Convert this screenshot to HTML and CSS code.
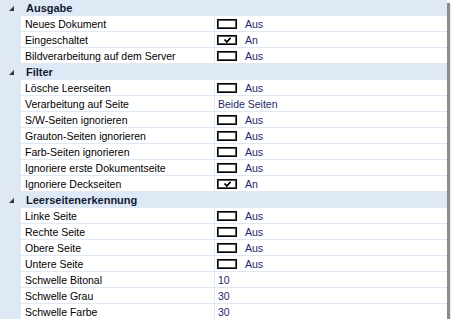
FILE: index.html
```html
<!DOCTYPE html>
<html lang="de">
<head>
<meta charset="utf-8">
<link rel="stylesheet" href="styles.css">
</head>
<body>
<div class="grid">
  <div class="cat"><svg class="arrow" width="5" height="5" viewBox="0 0 5 5"><polygon points="5,0 5,5 0,5"/></svg><span>Ausgabe</span></div>
  <div class="row"><div class="label">Neues Dokument</div><div class="value"><span class="cb"></span>Aus</div></div>
  <div class="row"><div class="label">Eingeschaltet</div><div class="value"><span class="cb"><svg width="9" height="6" viewBox="0 0 9 6"><path d="M1.5 2.5 L3.8 5 L7.5 0.8" fill="none" stroke="#000" stroke-width="1.8"/></svg></span>An</div></div>
  <div class="row last"><div class="label">Bildverarbeitung auf dem Server</div><div class="value"><span class="cb"></span>Aus</div></div>

  <div class="cat"><svg class="arrow" width="5" height="5" viewBox="0 0 5 5"><polygon points="5,0 5,5 0,5"/></svg><span>Filter</span></div>
  <div class="row"><div class="label">Lösche Leerseiten</div><div class="value"><span class="cb"></span>Aus</div></div>
  <div class="row"><div class="label">Verarbeitung auf Seite</div><div class="value">Beide Seiten</div></div>
  <div class="row"><div class="label">S/W-Seiten ignorieren</div><div class="value"><span class="cb"></span>Aus</div></div>
  <div class="row"><div class="label">Grauton-Seiten ignorieren</div><div class="value"><span class="cb"></span>Aus</div></div>
  <div class="row"><div class="label">Farb-Seiten ignorieren</div><div class="value"><span class="cb"></span>Aus</div></div>
  <div class="row"><div class="label">Ignoriere erste Dokumentseite</div><div class="value"><span class="cb"></span>Aus</div></div>
  <div class="row last"><div class="label">Ignoriere Deckseiten</div><div class="value"><span class="cb"><svg width="9" height="6" viewBox="0 0 9 6"><path d="M1.5 2.5 L3.8 5 L7.5 0.8" fill="none" stroke="#000" stroke-width="1.8"/></svg></span>An</div></div>

  <div class="cat"><svg class="arrow" width="5" height="5" viewBox="0 0 5 5"><polygon points="5,0 5,5 0,5"/></svg><span>Leerseitenerkennung</span></div>
  <div class="row"><div class="label">Linke Seite</div><div class="value"><span class="cb"></span>Aus</div></div>
  <div class="row"><div class="label">Rechte Seite</div><div class="value"><span class="cb"></span>Aus</div></div>
  <div class="row"><div class="label">Obere Seite</div><div class="value"><span class="cb"></span>Aus</div></div>
  <div class="row"><div class="label">Untere Seite</div><div class="value"><span class="cb"></span>Aus</div></div>
  <div class="row"><div class="label">Schwelle Bitonal</div><div class="value num">10</div></div>
  <div class="row"><div class="label">Schwelle Grau</div><div class="value num">30</div></div>
  <div class="row end"><div class="label">Schwelle Farbe</div><div class="value num">30</div></div>
</div>
</body>
</html>
```

FILE: styles.css
```css
html, body {
  margin: 0;
  padding: 0;
  background: #ffffff;
}

.grid {
  width: 447px;
  display: flex;
  flex-direction: column;
  background: #ffffff;
  box-shadow: 3px 3px 1px rgba(0, 0, 0, 0.45);
  font-family: "Liberation Sans", Arial, sans-serif;
  font-size: 10.5px;
  color: #000000;
}

.cat {
  height: 16px;
  display: flex;
  align-items: center;
  background: #dfe9f5;
  font-weight: bold;
  font-size: 11px;
  color: #0f1a33;
}

.arrow {
  margin-left: 9px;
  margin-right: 12px;
  fill: #333333;
}

.row {
  height: 16px;
  box-sizing: border-box;
  display: grid;
  grid-template-columns: 21px 194px 1fr;
  border-bottom: 1px solid #dde9f5;
}

.row::before {
  content: "";
  background: #dfe9f5;
}

.row.last {
  border-bottom-color: #e4e7ec;
}

.row.end {
  border-bottom: 0;
  height: 15px;
}

.label {
  padding-left: 4px;
  line-height: 16px;
  border-right: 1px solid #dde9f5;
  white-space: nowrap;
  overflow: hidden;
}

.value {
  display: flex;
  align-items: center;
  padding-left: 3px;
  color: #1c2a66;
  white-space: nowrap;
}

.num {
  color: #2a236e;
}

.cb {
  width: 20px;
  height: 10px;
  box-sizing: border-box;
  border: 1px solid #000000;
  box-shadow: inset 0 0 0 1px #555555;
  background: #ffffff;
  margin-left: -1px;
  margin-right: 8px;
  display: flex;
  align-items: flex-end;
  justify-content: center;
  padding-bottom: 1px;
}

.cb svg {
  display: block;
}
```
